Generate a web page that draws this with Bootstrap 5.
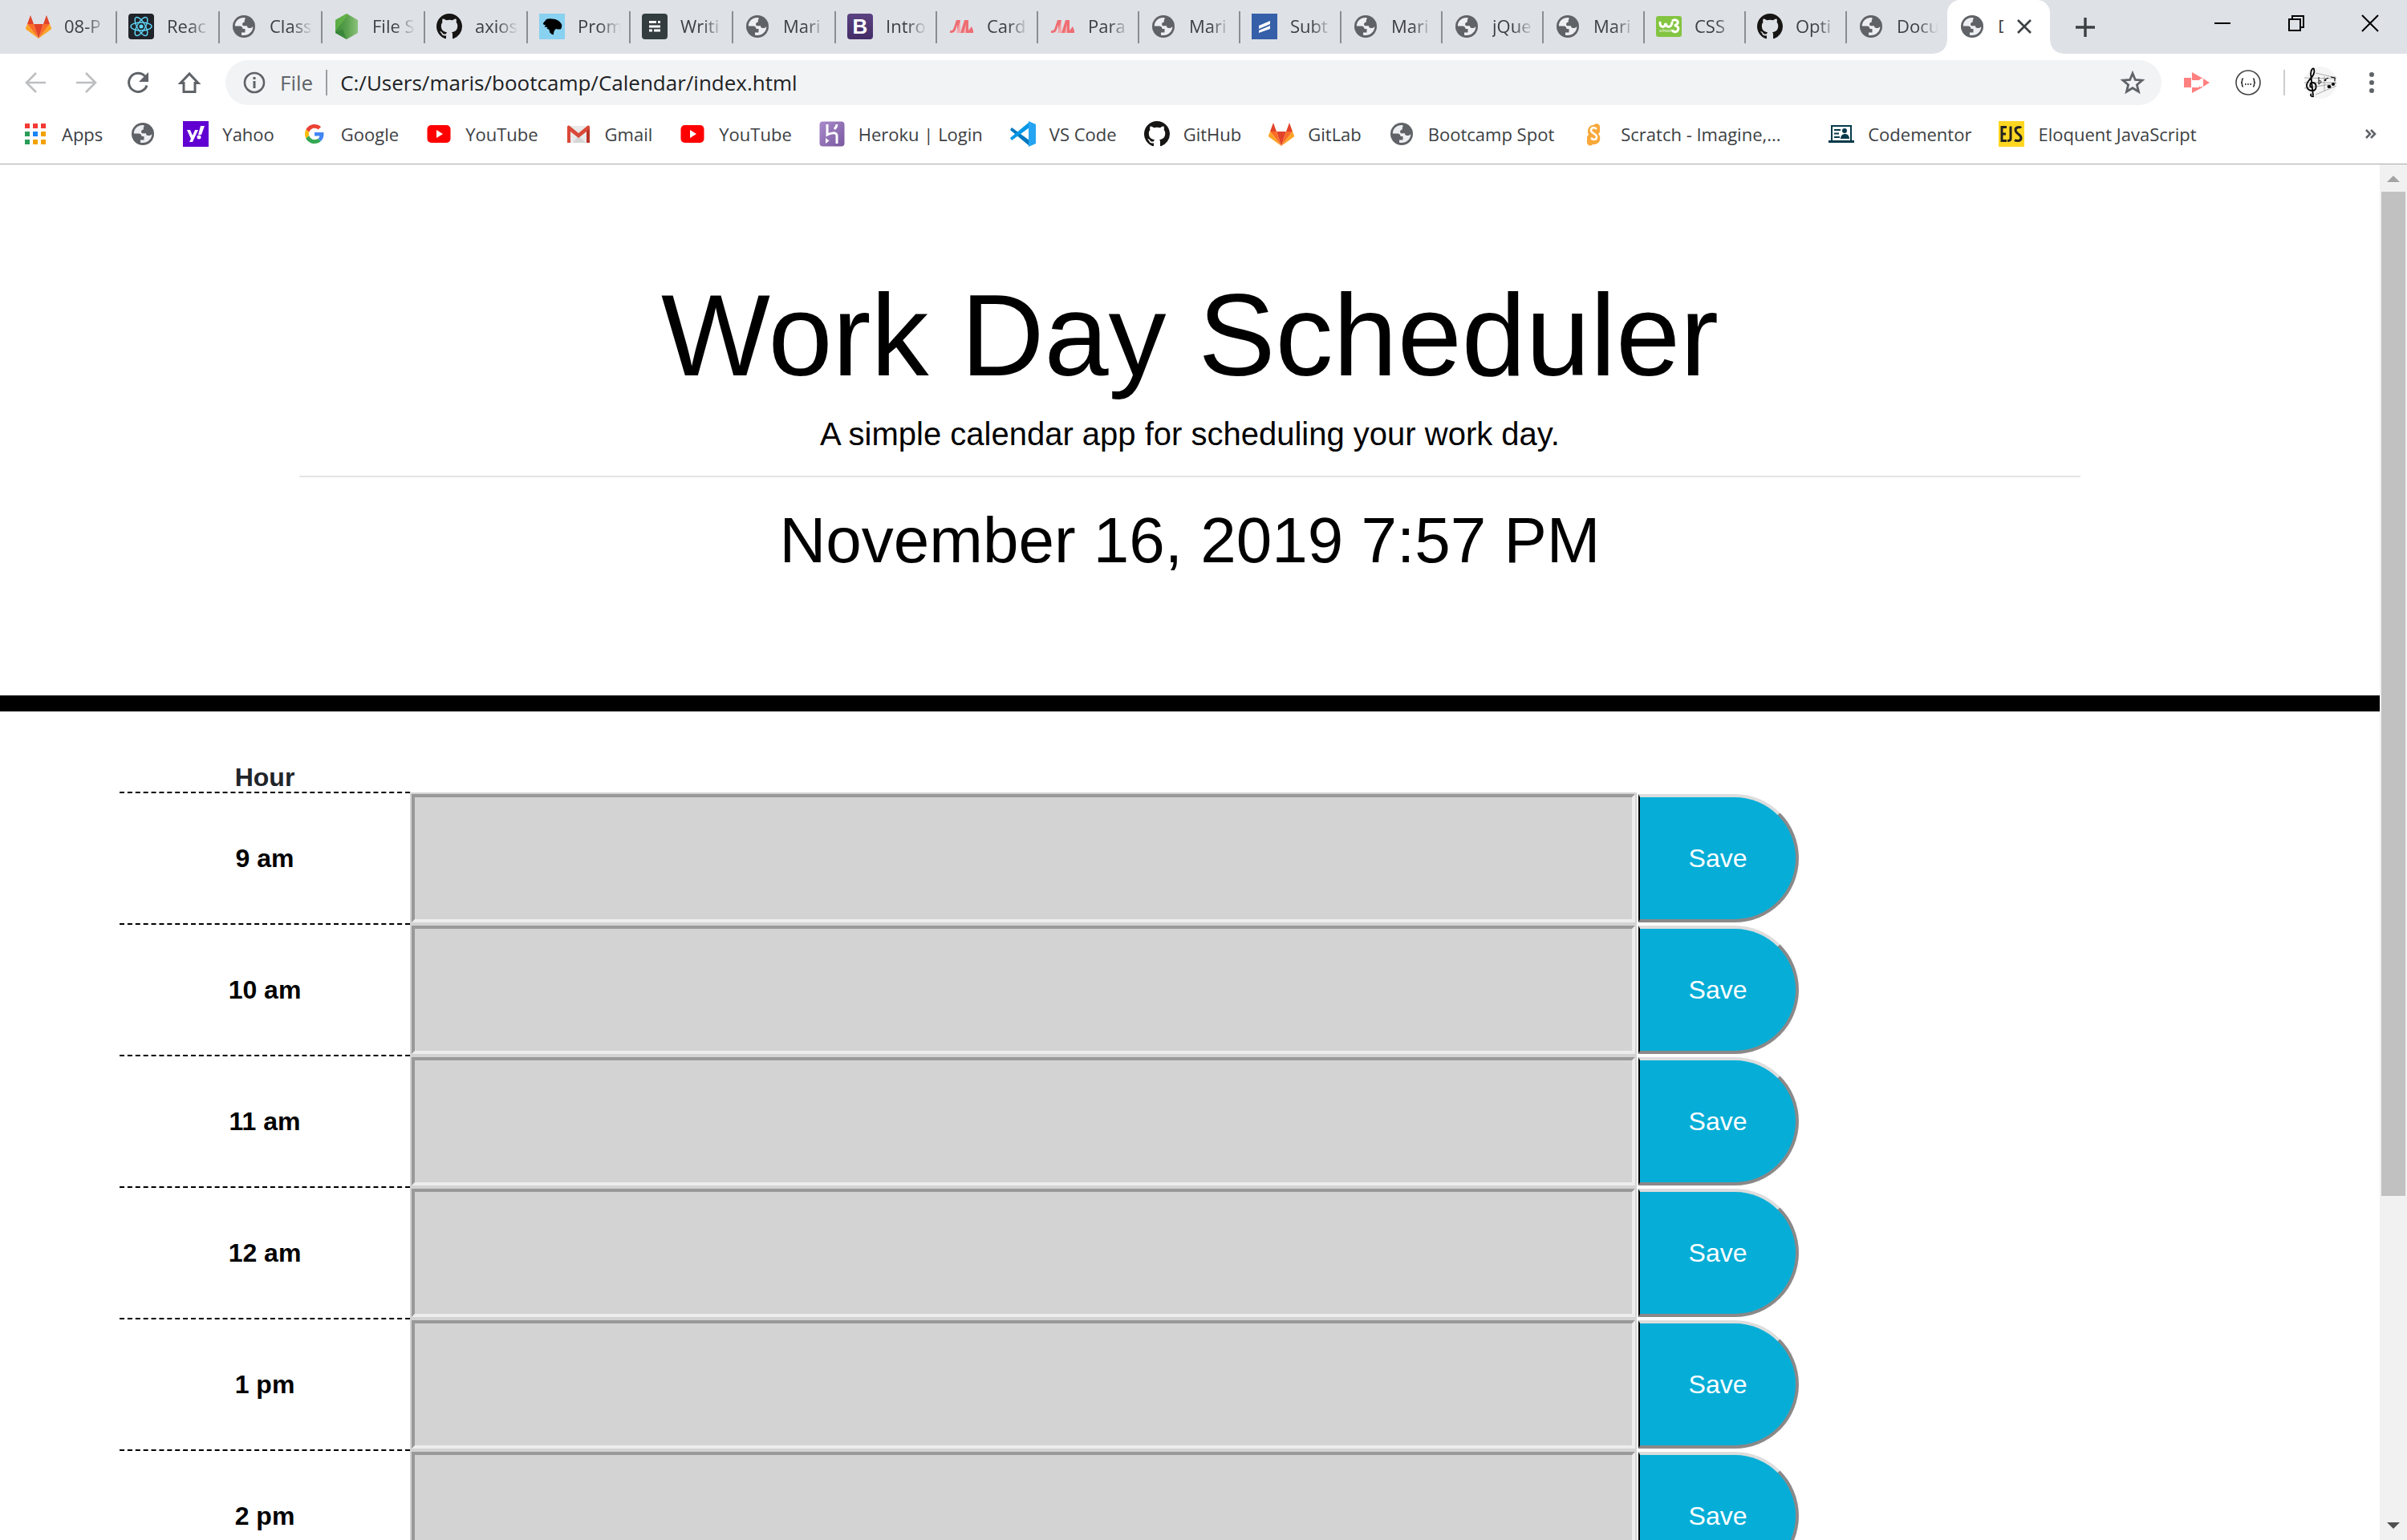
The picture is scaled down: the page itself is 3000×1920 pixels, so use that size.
<!DOCTYPE html>
<html lang="en">
<head>
<meta charset="utf-8">
<meta name="viewport" content="width=device-width, initial-scale=1">
<title>Work Day Scheduler</title>
<link href="https://cdn.jsdelivr.net/npm/bootstrap@5.3.0/dist/css/bootstrap.min.css" rel="stylesheet">
<style>
  body { font-family: "Liberation Sans", Arial, sans-serif; font-size: 32px; color: #000; background: #fff; }
  .chrome-ui { font-family: "Open Sans", "Noto Sans", sans-serif; font-size: 22px; line-height: 32px; color: #3c4043; }
  .chrome-ui a { color: inherit; text-decoration: none; }
  .chrome-ui button { border: 0; background: none; padding: 0; color: inherit; line-height: 0; }
  .ico { width: 32px; height: 32px; flex: none; display: block; }

  /* tab strip */
  .tab-strip { background: #dee1e6; height: 67px; padding-left: 17px; }
  .tab-item { position: relative; width: 128px; height: 67px; padding: 0 10px 2px 15px; gap: 16px; }
  .tab-item.narrow { width: 126px; }
  .tab-item::after { content: ""; position: absolute; right: -1px; top: 14px; width: 2px; height: 40px; background: #8a8d91; }
  .tab-item.bare::after { display: none; }
  .tab-label { overflow: hidden; white-space: nowrap; flex: 1 1 0; min-width: 0; line-height: 30px; padding-bottom: 2px;
    -webkit-mask-image: linear-gradient(to right, #000 50%, transparent 98%); mask-image: linear-gradient(to right, #000 50%, transparent 98%); }
  .tab-current { position: relative; width: 128px; height: 67px; padding: 0 0 2px 15px; background: #fff; border-radius: 16px 16px 0 0; }
  .tab-current::before, .tab-current::after { content: ""; position: absolute; bottom: 0; width: 16px; height: 16px; }
  .tab-current::before { left: -16px; background: radial-gradient(circle at 0 0, transparent 15px, #fff 16px); }
  .tab-current::after { right: -16px; background: radial-gradient(circle at 100% 0, transparent 15px, #fff 16px); }
  .tab-current .cut { width: 7px; overflow: hidden; white-space: nowrap; margin: 0 10px 0 16px; line-height: 30px; padding-bottom: 2px; }
  .new-tab { margin-left: 28px; }
  .win-ctl { gap: 60px; padding: 0 30px 10px 0; }

  /* toolbar */
  .tool-row { height: 72px; padding: 0 28px; }
  .nav-set { gap: 32px; margin-right: 29px; }
  .omnibox { background: #f1f3f4; height: 56px; border-radius: 28px; padding: 0 20px; color: #5f6368; font-size: 26px; }
  .omnibox input { border: 0; background: none; outline: 0; color: #202124; font-size: 26px; padding: 0 0 0 16px; }
  .v-rule { width: 2px; height: 32px; background: #9a9da1; }
  .v-rule.pale { background: #ccc; }

  /* bookmarks */
  .marks-row { height: 66px; padding: 0 30px 10px 28px; gap: 34px; border-bottom: 1px solid #a9a9a9; }
  .marks-row a { display: flex; align-items: center; gap: 17px; white-space: nowrap; }
  .long-mark { min-width: 274px; }

  /* page */
  .hero { padding: 127px 0 145px; border-bottom: 20px solid #000; text-align: center; }
  .hero-inner { max-width: 2220px; }
  .hero h1 { font-size: 144px; line-height: 173px; margin: 0 0 6px; font-weight: 400; }
  .hero .tagline { font-size: 40px; line-height: 60px; margin: 0; }
  .hero hr { margin: 22px 0 31px; border: 0; height: 2px; background: #e5e5e5; opacity: 1; }
  .hero h2 { font-size: 80px; line-height: 96px; margin: 0; font-weight: 400; }
  .planner { padding: 63px 724px 0 149px; }
  .hour-col { width: 362px; flex: none; font-weight: 700; text-align: center; }
  .hour-head { line-height: 38px; color: #212529; }
  .time-row { height: 164px; }
  .time-row .hour-col { border-top: 2px dashed #000; margin-top: -1px; padding-bottom: 2px; }
  .slot-cell { background: #d3d3d3; padding: 2px; }
  .slot-cell textarea { display: block; width: 100%; height: 100%; resize: none; outline: 0; background: #d3d3d3;
    border: 4px solid; border-color: #999 #ededed #ededed #999; border-radius: 0; }
  .save-btn { width: 200px; height: 160px; margin: 2px 0 0 2px; flex: none; color: #fff; background: #06aed7;
    border: 4px solid; border-color: #ddd #8a8888 #8a8888 #000; border-left-width: 2px; border-radius: 0 80px 80px 0; padding: 0; }

  .scroll-track { width: 34px; background: #f1f1f1; padding: 14px 2px; }
  .scroll-thumb { height: 1252px; background: #c1c1c1; margin-top: 12px; }
  .scroll-track svg { width: 16px; height: 8px; display: block; margin: 0 auto; }
</style>
</head>
<body class="vh-100 overflow-hidden d-flex flex-column">

<svg width="0" height="0" class="position-absolute" aria-hidden="true">
  <defs>
    <linearGradient id="bsg" x1="0" y1="0" x2="0" y2="1"><stop offset="0" stop-color="#5b4282"/><stop offset="1" stop-color="#432c66"/></linearGradient>
    <linearGradient id="hkg" x1="0" y1="0" x2="1" y2="1"><stop offset="0" stop-color="#a98bcb"/><stop offset="1" stop-color="#79589f"/></linearGradient>
    <linearGradient id="ndg" x1="0" y1="0" x2="1" y2="0"><stop offset="0" stop-color="#3f8b3d"/><stop offset=".5" stop-color="#58a04b"/><stop offset="1" stop-color="#8cc27c"/></linearGradient>
    <symbol id="globe" viewBox="0 0 32 32"><circle cx="16" cy="16" r="14" fill="#5f6368"/><path fill="#eceef1" d="M17 5C10 4.500 5 9 4.800 15.500h6.200c2 0 3.500 1.500 3.500 3.500h3v4.500h-4.500v3.200C20.500 28.500 27.500 23 27.300 16c-1.300 1.500-2.600 2.200-4.600 2-1.800 0-2.700-1-2.700-2.700h-5c-1.800-1.800-.8-4.600 1.800-4.800V8.500c0-1 .4-1.600 1.200-2z"/></symbol>
    <symbol id="github" viewBox="0 0 16 16"><path fill="#161514" d="M8 0C3.580 0 0 3.580 0 8c0 3.540 2.290 6.530 5.470 7.590.4.070.55-.17.55-.38 0-.19-.01-.82-.01-1.490-2.010.37-2.530-.49-2.690-.94-.09-.23-.48-.94-.82-1.130-.28-.15-.68-.52-.01-.53.63-.01 1.080.58 1.230.82.72 1.210 1.870.87 2.330.66.07-.52.28-.87.51-1.070-1.780-.2-3.640-.89-3.640-3.950 0-.87.31-1.590.82-2.150-.08-.2-.36-1.020.08-2.120 0 0 .67-.21 2.200.82.64-.18 1.320-.27 2-.27s1.360.09 2 .27c1.530-1.040 2.200-.82 2.200-.82.44 1.100.16 1.920.08 2.120.51.56.82 1.270.82 2.150 0 3.070-1.870 3.750-3.650 3.950.29.25.54.73.54 1.480 0 1.070-.01 1.930-.01 2.200 0 .21.15.46.55.38A8.010 8.010 0 0 0 16 8c0-4.420-3.580-8-8-8Z"/></symbol>
    <symbol id="gitlab" viewBox="0 0 32 32"><path fill="#e24329" d="M16 31 22 13H10zM6 2 2 13h8zM26 2l4 11h-8z"/><path fill="#fc6d26" d="M16 31 10 13H2zM16 31l6-18h8z"/><path fill="#fca326" d="M2 13 0 18c0 1 0 1.500 1 2l15 11zM30 13l2 5c0 1 0 1.500-1 2L16 31z"/></symbol>
    <symbol id="react" viewBox="0 0 32 32"><rect width="32" height="32" rx="4" fill="#20232a"/><circle cx="16" cy="16" r="2.500" fill="#61dafb"/><g fill="none" stroke="#61dafb" stroke-width="1.400"><ellipse cx="16" cy="16" rx="13" ry="5"/><ellipse cx="16" cy="16" rx="13" ry="5" transform="rotate(60 16 16)"/><ellipse cx="16" cy="16" rx="13" ry="5" transform="rotate(120 16 16)"/></g></symbol>
    <symbol id="node" viewBox="0 0 32 32"><path fill="url(#ndg)" d="m16 0 14 8v16l-14 8-14-8V8z"/><path fill="#6cc24a" opacity=".6" d="M16 0 2 8v14L18 1z"/><path fill="#2f7d32" opacity=".6" d="M2 24 11 19l5 13z"/></symbol>
    <symbol id="lion" viewBox="0 0 32 32"><rect width="32" height="32" fill="#89d1f1"/><path d="M5 12c1-2 3-3 4-5 3-1 6-.8 9-.2 3 .2 4 1.200 6 2 2 2 3.500 3 4.200 5 0 2 0 4-1.200 5.500-2 .7-4 0-6-.3-1.500 1-3 3-3 7.300-2-.3-4-1.500-5-3.300l-.5-3-3-1.500 1-1.500-4-.5 1.500-2-3-1.200z"/></symbol>
    <symbol id="writer" viewBox="0 0 32 32"><rect width="32" height="32" rx="4" fill="#333d40"/><path fill="#fff" d="M9 9h9v3H9zm11 0h3v3h-3zM9 14.500h14v3H9zm0 5h4v3H9zm6 0h8v3h-8z"/></symbol>
    <symbol id="boots" viewBox="0 0 32 32"><rect width="32" height="32" rx="4" fill="url(#bsg)"/><text x="16" y="25" text-anchor="middle" font-family="Liberation Sans" font-weight="700" font-size="26" fill="#fff">B</text></symbol>
    <symbol id="matm" viewBox="0 0 32 32"><path fill="#ee6e73" d="M2 21c3 1 4-1 5-4l3-9h5v16h-4V14l-2 6c-1 3-3 4-7 4z"/><path fill="#f5a9ad" d="M10 24 15 8v16zM19 24l5-14v14z"/><path fill="#ee6e73" d="M15 24 20 8h5v13l4-5 2 5v3h-9V14l-3 10z"/></symbol>
    <symbol id="subt" viewBox="0 0 32 32"><rect width="32" height="32" fill="#355fa8"/><path fill="#fff" d="m9 15 14-6v4L9 19zm0 6 14-6v4L9 24z"/></symbol>
    <symbol id="w3" viewBox="0 0 32 32"><rect y="3" width="32" height="26" rx="3" fill="#83c441"/><path d="M5 11c0 7 6 7 7 1 1 6 7 6 8-1" fill="none" stroke="#fff" stroke-width="3" stroke-linecap="round"/><path d="M20 9c4-3 8 0 7 3-1 2-2 2-4 3 4 0 6 3 4 6-2 3-6 2-6.500-1" fill="none" stroke="#fff" stroke-width="3"/><text x="4" y="23" font-family="Open Sans" font-size="5" fill="#fff">schools</text></symbol>
    <symbol id="apps" viewBox="0 0 32 32"><path fill="#f33a34" d="M3 3h6v6H3zM13 3h6v6h-6zM23 3h6v6h-6z"/><path fill="#2a9d58" d="M3 13h6v6H3zM3 23h6v6H3z"/><path fill="#1a84f5" d="M13 13h6v6h-6z"/><path fill="#f2a200" d="M23 13h6v6h-6zM13 23h6v6h-6zM23 23h6v6h-6z"/></symbol>
    <symbol id="yahoo" viewBox="0 0 32 32"><rect width="32" height="32" fill="#6001d2"/><path fill="#fff" d="M5 11h4l3 7 3-7h4l-7 15H8l2-4zM22 6h5l-4 11h-4z"/><circle cx="20" cy="20" r="2.500" fill="#fff"/></symbol>
    <symbol id="google" viewBox="0 0 64 64"><g transform="translate(8 8)"><path fill="#EA4335" d="M24 9.500c3.540 0 6.710 1.220 9.210 3.600l6.850-6.850C35.900 2.380 30.470 0 24 0 14.620 0 6.510 5.380 2.560 13.220l7.980 6.190C12.430 13.720 17.740 9.500 24 9.500z"/><path fill="#4285F4" d="M46.980 24.550c0-1.570-.15-3.090-.38-4.550H24v9.020h12.940c-.58 2.960-2.260 5.480-4.780 7.180l7.730 6c4.510-4.180 7.090-10.360 7.090-17.650z"/><path fill="#FBBC05" d="M10.530 28.590c-.48-1.450-.76-2.990-.76-4.590s.27-3.140.76-4.590l-7.980-6.190C.92 16.460 0 20.120 0 24c0 3.880.92 7.540 2.560 10.780l7.970-6.190z"/><path fill="#34A853" d="M24 48c6.480 0 11.930-2.130 15.890-5.810l-7.730-6c-2.150 1.450-4.920 2.300-8.160 2.300-6.260 0-11.570-4.220-13.470-9.910l-7.980 6.190C6.510 42.620 14.620 48 24 48z"/></g></symbol>
    <symbol id="youtube" viewBox="0 0 32 32"><rect x="1.500" y="5" width="29" height="22" rx="5" fill="#f00"/><path fill="#fff" d="m13 11 8 5-8 5z"/></symbol>
    <symbol id="gmail" viewBox="0 0 32 32"><path fill="#e9e9e9" d="M2 6h28v21H2z"/><path fill="#d5d5d5" d="m9 27 7-9 9 9z"/><path fill="#d94838" d="M2 27V7c0-1 2-2 3-1l11 9 11-9c1-1 3 0 3 1v20h-4V13l-10 8L6 13v14z"/><path fill="#b93327" d="M26 13l4-4v18h-4z"/></symbol>
    <symbol id="heroku" viewBox="0 0 32 32"><rect x=".5" y=".5" width="31" height="31" rx="4" fill="url(#hkg)"/><path d="M10 4v13c4-2 12-4 12 1v10M22 4c0 3-1 4-3 6" fill="none" stroke="#fff" stroke-width="3"/><path fill="#fff" d="m8 21 4.500 3.500L8 28z"/></symbol>
    <symbol id="vscode" viewBox="0 0 32 32"><path fill="#0078bf" d="m2 8 22 16v7L0 11z"/><path fill="#0098e6" d="m2 24 22-16V1L0 21z"/><path fill="#24a4f2" d="m23 0 9 4v24l-9 4z"/></symbol>
    <symbol id="scratch" viewBox="0 0 32 32"><path fill="#f9a83a" d="M11 6c2-1 3-1 4-1 3-3 8-2 8 2v6c0 1-1 2-2 3 3 2 3 9 0 11-2 2-5 2-7 2-2 3-7 1-7-2v-7c0-1 1-2 2-3-2-3-1-9 2-11z"/><path d="M19 10c-3-3-7-2-7 1.500 0 4 7 4 7 8s-4 4.500-7 1.500" fill="none" stroke="#fff" stroke-width="2.500"/></symbol>
    <symbol id="mentor" viewBox="0 0 32 32"><path fill="#06394a" d="M3 5h26v19h3v3H0v-3h3zm2 2v17h22V7z" fill-rule="evenodd"/><path stroke="#06394a" stroke-width="2" d="M7 11h8M7 15.500h6M7 20h7"/><circle cx="20" cy="12" r="3" fill="#06394a"/><path fill="#06394a" d="M15 22c0-8 11-8 11 0z"/></symbol>
    <symbol id="ejs" viewBox="0 0 32 32"><rect width="32" height="32" fill="#ffd722"/><path d="M10 7.500H4v17h6M4 16h5M15 6.500V22q0 2.500-4 2.500M28 8.500c-1-1.500-7-1.500-7 2.500 0 5 7 5 7 10 0 4.500-6 4-8 2.500" fill="none" stroke="#222" stroke-width="3"/></symbol>
    <symbol id="back" viewBox="0 0 32 32"><path d="M29 16H5M17 4 5 16l12 12" fill="none" stroke="#bcbec0" stroke-width="2.600"/></symbol>
    <symbol id="fwd" viewBox="0 0 32 32"><path d="M3 16h24M15 4l12 12-12 12" fill="none" stroke="#bcbec0" stroke-width="2.600"/></symbol>
    <symbol id="reload" viewBox="0 0 32 32"><path d="M27 19.500A11.500 11.500 0 1 1 24.500 8" fill="none" stroke="#5f6368" stroke-width="3"/><path fill="#5f6368" d="M29 3v12H17z"/></symbol>
    <symbol id="home" viewBox="0 0 32 32"><path d="M16 5 5 16.500h4V27.500h14V16.500h4z" fill="none" stroke="#5f6368" stroke-width="3"/></symbol>
    <symbol id="info" viewBox="0 0 32 32"><circle cx="16" cy="16" r="12" fill="none" stroke="#5f6368" stroke-width="2.600"/><path fill="#5f6368" d="M14.500 9h3v3h-3zm0 5h3v9h-3z"/></symbol>
    <symbol id="star" viewBox="0 0 32 32"><path d="m16 4.500 3.300 8 8.700.7-6.600 5.600 2.100 8.500L16 22.700l-7.500 4.600 2.100-8.500L4 13.200l8.700-.7z" fill="none" stroke="#5f6368" stroke-width="2.800"/></symbol>
    <symbol id="cast" viewBox="0 0 32 32"><path fill="#ff8080" d="M0 10h9v12H0zM10 3l14 8h-3l-2 2h-9zM10 22h9v-2l2 2 2-2v2L10 29zM24 11l8 5-8 5z"/></symbol>
    <symbol id="json" viewBox="0 0 32 32"><circle cx="16" cy="16" r="15" fill="none" stroke="#444" stroke-width="1.600"/><path d="M10 11c-3 0 0 5-3 5 3 0 0 5 3 5M22 11c3 0 0 5 3 5-3 0 0 5-3 5" fill="none" stroke="#333" stroke-width="1.600"/><path fill="#333" d="M12 17h1.500v2H12zM15.200 17h1.500v2h-1.500zM18.500 17H20v2h-1.500z"/></symbol>
    <symbol id="music" viewBox="0 0 40 40"><circle cx="20" cy="20" r="20" fill="#f5f5f5"/><g fill="none" stroke="#999" stroke-width=".8"><path d="M14 8 40 14M0 14l40 1M0 20h40M0 27l40-6M14 35l26-11M25 12v18M38 12v10"/></g><path d="M12 37c-4 1-5-2-3-3M11 36 8 9c0-5 3-8 4-6 2 5-2 10-6 14-6 7-2 13 4 13 6 0 6-9 1-10-4-.5-5 5-2 6" fill="none" stroke="#000" stroke-width="1.800"/><path d="M18 13v9c5-3 3-5 0-4" fill="none" stroke="#111" stroke-width="1"/><g><ellipse cx="31" cy="25" rx="2.500" ry="2"/><ellipse cx="36" cy="22" rx="2" ry="2"/><ellipse cx="26" cy="17" rx="1.500" ry="1"/></g><path d="M26 16l4-2M33 13l5 1v4" stroke="#000" stroke-width="1" fill="none"/></symbol>
    <symbol id="dots" viewBox="0 0 32 32"><g fill="#5f6368"><circle cx="16" cy="6" r="3"/><circle cx="16" cy="16" r="3"/><circle cx="16" cy="26" r="3"/></g></symbol>
    <symbol id="more" viewBox="0 0 32 32"><path d="m11 11 5 5-5 5M17 11l5 5-5 5" fill="none" stroke="#5f6368" stroke-width="2.600"/></symbol>
    <symbol id="cross" viewBox="0 0 32 32"><path d="m8 8 16 16M24 8 8 24" stroke="#3c4043" stroke-width="2.600"/></symbol>
    <symbol id="plus" viewBox="0 0 32 32"><path d="M16 4v24M4 16h24" stroke="#3c4043" stroke-width="3.400"/></symbol>
    <symbol id="wmin" viewBox="0 0 32 32"><path d="M6 16h20" stroke="#000" stroke-width="2"/></symbol>
    <symbol id="wres" viewBox="0 0 32 32"><path d="M7 11h14v14H7zM11 11V7h14v14h-4" fill="none" stroke="#000" stroke-width="2"/></symbol>
    <symbol id="wclose" viewBox="0 0 32 32"><path d="m6 6 20 20M26 6 6 26" stroke="#000" stroke-width="2"/></symbol>
  </defs>
</svg>

<header class="chrome-ui flex-shrink-0">
  <nav class="tab-strip d-flex align-items-center" aria-label="Tabs">
    <a href="#" class="tab-item d-flex align-items-center"><svg class="ico"><use href="#gitlab"/></svg><span class="tab-label">08-P</span></a>
    <a href="#" class="tab-item d-flex align-items-center"><svg class="ico"><use href="#react"/></svg><span class="tab-label">Reac</span></a>
    <a href="#" class="tab-item d-flex align-items-center"><svg class="ico"><use href="#globe"/></svg><span class="tab-label">Class</span></a>
    <a href="#" class="tab-item d-flex align-items-center"><svg class="ico"><use href="#node"/></svg><span class="tab-label">File S</span></a>
    <a href="#" class="tab-item d-flex align-items-center"><svg class="ico"><use href="#github"/></svg><span class="tab-label">axios</span></a>
    <a href="#" class="tab-item d-flex align-items-center"><svg class="ico"><use href="#lion"/></svg><span class="tab-label">Prom</span></a>
    <a href="#" class="tab-item d-flex align-items-center"><svg class="ico"><use href="#writer"/></svg><span class="tab-label">Writi</span></a>
    <a href="#" class="tab-item d-flex align-items-center"><svg class="ico"><use href="#globe"/></svg><span class="tab-label">Mari</span></a>
    <a href="#" class="tab-item narrow d-flex align-items-center"><svg class="ico"><use href="#boots"/></svg><span class="tab-label">Intro</span></a>
    <a href="#" class="tab-item narrow d-flex align-items-center"><svg class="ico"><use href="#matm"/></svg><span class="tab-label">Card</span></a>
    <a href="#" class="tab-item narrow d-flex align-items-center"><svg class="ico"><use href="#matm"/></svg><span class="tab-label">Para</span></a>
    <a href="#" class="tab-item narrow d-flex align-items-center"><svg class="ico"><use href="#globe"/></svg><span class="tab-label">Mari</span></a>
    <a href="#" class="tab-item narrow d-flex align-items-center"><svg class="ico"><use href="#subt"/></svg><span class="tab-label">Subt</span></a>
    <a href="#" class="tab-item narrow d-flex align-items-center"><svg class="ico"><use href="#globe"/></svg><span class="tab-label">Mari</span></a>
    <a href="#" class="tab-item narrow d-flex align-items-center"><svg class="ico"><use href="#globe"/></svg><span class="tab-label">jQue</span></a>
    <a href="#" class="tab-item narrow d-flex align-items-center"><svg class="ico"><use href="#globe"/></svg><span class="tab-label">Mari</span></a>
    <a href="#" class="tab-item narrow d-flex align-items-center"><svg class="ico"><use href="#w3"/></svg><span class="tab-label">CSS</span></a>
    <a href="#" class="tab-item narrow d-flex align-items-center"><svg class="ico"><use href="#github"/></svg><span class="tab-label">Opti</span></a>
    <a href="#" class="tab-item narrow bare d-flex align-items-center"><svg class="ico"><use href="#globe"/></svg><span class="tab-label">Docu</span></a>
    <div class="tab-current d-flex align-items-center"><svg class="ico"><use href="#globe"/></svg><span class="cut">D</span><button type="button" aria-label="Close tab"><svg class="ico"><use href="#cross"/></svg></button></div>
    <button type="button" class="new-tab" aria-label="New tab"><svg class="ico"><use href="#plus"/></svg></button>
    <div class="win-ctl d-flex ms-auto">
      <button type="button" aria-label="Minimize"><svg class="ico"><use href="#wmin"/></svg></button>
      <button type="button" aria-label="Restore"><svg class="ico"><use href="#wres"/></svg></button>
      <button type="button" aria-label="Close window"><svg class="ico"><use href="#wclose"/></svg></button>
    </div>
  </nav>

  <div class="tool-row d-flex align-items-center">
    <div class="nav-set d-flex">
      <button type="button" aria-label="Back"><svg class="ico"><use href="#back"/></svg></button>
      <button type="button" aria-label="Forward"><svg class="ico"><use href="#fwd"/></svg></button>
      <button type="button" aria-label="Reload"><svg class="ico"><use href="#reload"/></svg></button>
      <button type="button" aria-label="Home"><svg class="ico"><use href="#home"/></svg></button>
    </div>
    <div class="omnibox d-flex align-items-center flex-grow-1">
      <svg class="ico me-3"><use href="#info"/></svg>
      <label for="address" class="me-3">File</label>
      <span class="v-rule"></span>
      <input id="address" type="text" class="flex-grow-1" value="C:/Users/maris/bootcamp/Calendar/index.html">
      <button type="button" aria-label="Bookmark this page"><svg class="ico"><use href="#star"/></svg></button>
    </div>
    <div class="d-flex align-items-center ps-4 gap-4">
      <button type="button" class="ms-1 me-2" aria-label="Screen recorder"><svg class="ico"><use href="#cast"/></svg></button>
      <button type="button" class="me-1" aria-label="JSON viewer"><svg class="ico"><use href="#json"/></svg></button>
      <span class="v-rule pale"></span>
      <button type="button" class="me-1" aria-label="Profile"><svg width="40" height="40"><use href="#music"/></svg></button>
      <button type="button" aria-label="Menu"><svg class="ico"><use href="#dots"/></svg></button>
    </div>
  </div>

  <nav class="marks-row d-flex align-items-center" aria-label="Bookmarks">
    <a href="#"><svg class="ico"><use href="#apps"/></svg>Apps</a>
    <a href="#" aria-label="Bookmark"><svg class="ico"><use href="#globe"/></svg></a>
    <a href="#"><svg class="ico"><use href="#yahoo"/></svg>Yahoo</a>
    <a href="#"><svg class="ico"><use href="#google"/></svg>Google</a>
    <a href="#"><svg class="ico"><use href="#youtube"/></svg>YouTube</a>
    <a href="#"><svg class="ico"><use href="#gmail"/></svg>Gmail</a>
    <a href="#"><svg class="ico"><use href="#youtube"/></svg>YouTube</a>
    <a href="#"><svg class="ico"><use href="#heroku"/></svg>Heroku | Login</a>
    <a href="#"><svg class="ico"><use href="#vscode"/></svg>VS Code</a>
    <a href="#"><svg class="ico"><use href="#github"/></svg>GitHub</a>
    <a href="#"><svg class="ico"><use href="#gitlab"/></svg>GitLab</a>
    <a href="#"><svg class="ico"><use href="#globe"/></svg>Bootcamp Spot</a>
    <a href="#" class="long-mark"><svg class="ico"><use href="#scratch"/></svg>Scratch - Imagine,...</a>
    <a href="#"><svg class="ico"><use href="#mentor"/></svg>Codementor</a>
    <a href="#"><svg class="ico"><use href="#ejs"/></svg>Eloquent JavaScript</a>
    <button type="button" class="ms-auto" aria-label="More bookmarks"><svg class="ico"><use href="#more"/></svg></button>
  </nav>
</header>

<div class="d-flex flex-grow-1 overflow-hidden">
  <main class="flex-grow-1 overflow-hidden">
    <section class="hero">
      <div class="hero-inner mx-auto">
        <h1>Work Day Scheduler</h1>
        <p class="tagline">A simple calendar app for scheduling your work day.</p>
        <hr>
        <h2>November 16, 2019 7:57 PM</h2>
      </div>
    </section>
    <section class="planner">
      <div class="hour-col hour-head">Hour</div>
      <div class="time-row d-flex">
        <label for="h9" class="hour-col d-flex align-items-center justify-content-center">9 am</label>
        <div class="slot-cell flex-grow-1"><textarea id="h9"></textarea></div>
        <button type="button" class="save-btn">Save</button>
      </div>
      <div class="time-row d-flex">
        <label for="h10" class="hour-col d-flex align-items-center justify-content-center">10 am</label>
        <div class="slot-cell flex-grow-1"><textarea id="h10"></textarea></div>
        <button type="button" class="save-btn">Save</button>
      </div>
      <div class="time-row d-flex">
        <label for="h11" class="hour-col d-flex align-items-center justify-content-center">11 am</label>
        <div class="slot-cell flex-grow-1"><textarea id="h11"></textarea></div>
        <button type="button" class="save-btn">Save</button>
      </div>
      <div class="time-row d-flex">
        <label for="h12" class="hour-col d-flex align-items-center justify-content-center">12 am</label>
        <div class="slot-cell flex-grow-1"><textarea id="h12"></textarea></div>
        <button type="button" class="save-btn">Save</button>
      </div>
      <div class="time-row d-flex">
        <label for="h13" class="hour-col d-flex align-items-center justify-content-center">1 pm</label>
        <div class="slot-cell flex-grow-1"><textarea id="h13"></textarea></div>
        <button type="button" class="save-btn">Save</button>
      </div>
      <div class="time-row d-flex">
        <label for="h14" class="hour-col d-flex align-items-center justify-content-center">2 pm</label>
        <div class="slot-cell flex-grow-1"><textarea id="h14"></textarea></div>
        <button type="button" class="save-btn">Save</button>
      </div>
    </section>
  </main>
  <div class="scroll-track d-flex flex-column flex-shrink-0" aria-hidden="true">
    <svg viewBox="0 0 16 8"><path fill="#a3a3a3" d="m8 0 8 8H0z"/></svg>
    <div class="scroll-thumb flex-shrink-0"></div>
    <svg class="mt-auto" viewBox="0 0 16 8"><path fill="#505050" d="m8 8 8-8H0z"/></svg>
  </div>
</div>

<script src="https://cdn.jsdelivr.net/npm/bootstrap@5.3.0/dist/js/bootstrap.bundle.min.js"></script>
</body>
</html>
